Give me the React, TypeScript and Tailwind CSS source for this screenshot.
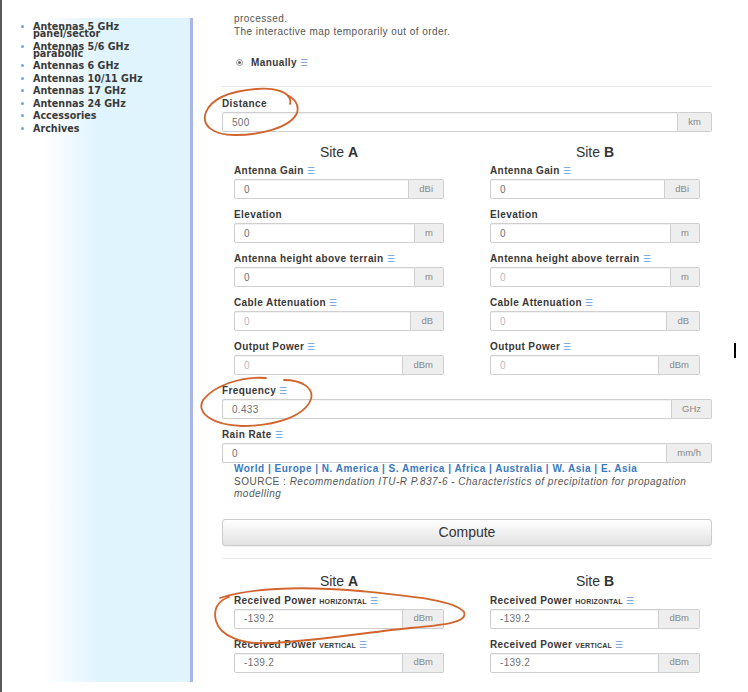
import React from 'react'

const SIDEBAR = [
  ['Antennas 5 GHz', 'panel/sector'],
  ['Antennas 5/6 GHz', 'parabolic'],
  ['Antennas 6 GHz'],
  ['Antennas 10/11 GHz'],
  ['Antennas 17 GHz'],
  ['Antennas 24 GHz'],
  ['Accessories'],
  ['Archives'],
]

const REGIONS = ['World', 'Europe', 'N. America', 'S. America', 'Africa', 'Australia', 'W. Asia', 'E. Asia']

function Info() {
  return <span className="ml-[3px] text-[8.5px] font-normal tracking-normal text-[#6b9ad6]">☰</span>
}

function InputGroup({ value, unit, faint }: { value: string; unit: string; faint?: boolean }) {
  return (
    <div className="flex h-[20px]">
      <div
        className={[
          'flex flex-1 items-center rounded-l-[2px] border border-[#cfcfcf] bg-white px-[9px] text-[10px] tracking-[0.3px] shadow-[inset_0_1px_1px_rgba(0,0,0,0.06)]',
          faint ? 'text-[#bbb]' : 'text-[#707070]',
        ].join(' ')}
      >
        {value}
      </div>
      <div className="flex items-center rounded-r-[2px] border border-l-0 border-[#cfcfcf] bg-[#eee] px-[10px] text-[9.5px] text-[#888]">
        {unit}
      </div>
    </div>
  )
}

function Label({ children }: { children: React.ReactNode }) {
  return <div className="mb-[3px] h-[11px] whitespace-nowrap text-[10px] font-bold leading-[11px] tracking-[0.4px] text-[#383838]">{children}</div>
}

type F = { label: string; info?: boolean; value: string; unit: string; faint?: boolean; sub?: string }

function Field({ label, info, value, unit, faint, sub }: F) {
  return (
    <div className="mb-[10px]">
      <Label>
        {label}
        {sub && <span className="ml-[3px] text-[7px] uppercase tracking-[0.2px]">{sub}</span>}
        {info && <Info />}
      </Label>
      <InputGroup value={value} unit={unit} faint={faint} />
    </div>
  )
}

function SiteTitle({ s }: { s: string }) {
  return (
    <div className="text-center text-[14px] leading-[15px] text-[#333]">
      Site <b>{s}</b>
    </div>
  )
}

const SITE_A: F[] = [
  { label: 'Antenna Gain', info: true, value: '0', unit: 'dBi' },
  { label: 'Elevation', value: '0', unit: 'm' },
  { label: 'Antenna height above terrain', info: true, value: '0', unit: 'm' },
  { label: 'Cable Attenuation', info: true, value: '0', unit: 'dB', faint: true },
  { label: 'Output Power', info: true, value: '0', unit: 'dBm', faint: true },
]

const SITE_B: F[] = [
  { label: 'Antenna Gain', info: true, value: '0', unit: 'dBi' },
  { label: 'Elevation', value: '0', unit: 'm' },
  { label: 'Antenna height above terrain', info: true, value: '0', unit: 'm', faint: true },
  { label: 'Cable Attenuation', info: true, value: '0', unit: 'dB', faint: true },
  { label: 'Output Power', info: true, value: '0', unit: 'dBm', faint: true },
]

const RESULT: F[] = [
  { label: 'Received Power', sub: 'horizontal', info: true, value: '-139.2', unit: 'dBm' },
  { label: 'Received Power', sub: 'vertical', info: true, value: '-139.2', unit: 'dBm' },
]

export default function App() {
  return (
    <div className="relative flex h-[692px] w-[748px] overflow-hidden bg-white font-['Liberation_Sans',Arial,sans-serif]">
      <div className="h-full w-[2px] shrink-0 bg-[#5a5a5a]" />

      {/* sidebar */}
      <div className="w-[191px] shrink-0 pt-[18px]">
        <div className="h-[664px] border-r-[3px] border-[#aab5ea] bg-gradient-to-r from-white from-[22%] to-[#e0f4fe] to-[52%] pt-[5px]">
          <ul className="flex flex-col gap-[5.5px] font-['DejaVu_Sans',Verdana,sans-serif] text-[9.6px] font-bold leading-[7px] text-[#3a3a3a]">
            {SIDEBAR.map((lines) => (
              <li key={lines[0]} className="flex">
                <span className="ml-[19px] mt-[2px] h-[3px] w-[3px] shrink-0 rounded-full bg-[#6aa8e0]" />
                <span className="ml-[9px]">
                  {lines.map((l) => (
                    <span key={l} className="block">
                      {l}
                    </span>
                  ))}
                </span>
              </li>
            ))}
          </ul>
        </div>
      </div>

      {/* main */}
      <div className="ml-[29px] w-[490px] shrink-0 pt-[12px]">
        <div className="pl-3 text-[10px] leading-[13px] tracking-[0.45px] text-[#555]">
          <div>processed.</div>
          <div>The interactive map temporarily out of order.</div>
        </div>

        <div className="mt-[18px] flex h-[12px] items-center pl-[14px]">
          <span className="flex h-[7px] w-[7px] items-center justify-center rounded-full border border-[#999]">
            <span className="h-[3px] w-[3px] rounded-full bg-[#666]" />
          </span>
          <span className="ml-[8px] text-[10px] font-bold tracking-[0.4px] text-[#383838]">
            Manually
            <Info />
          </span>
        </div>

        <div className="mt-[18px] h-px bg-[#e8e8e8]" />

        <div className="mt-[11px]">
          <Field label="Distance" value="500" unit="km" />
        </div>

        <div className="-mt-[10px] grid grid-cols-[210px_210px] gap-x-[46px] pl-3">
          {[
            ['A', SITE_A],
            ['B', SITE_B],
          ].map(([s, fields]) => (
            <div key={s as string}>
              <div className="mb-[5px] mt-[13px]">
                <SiteTitle s={s as string} />
              </div>
              {(fields as F[]).map((f) => (
                <Field key={f.label} {...f} />
              ))}
            </div>
          ))}
        </div>

        <Field label="Frequency" info value="0.433" unit="GHz" />
        <div>
          <Label>
            Rain Rate
            <Info />
          </Label>
          <InputGroup value="0" unit="mm/h" />
        </div>

        <div className="pl-3 pr-3 text-[10px] leading-[12.5px]">
          <div className="font-bold tracking-[0.5px] text-[#3a78c0]">
            {REGIONS.map((r, i) => (
              <span key={r}>
                {i > 0 && ' | '}
                {r}
              </span>
            ))}
          </div>
          <div className="tracking-[0.5px] text-[#555]">
            SOURCE : <i>Recommendation ITU-R P.837-6 - Characteristics of precipitation for propagation modelling</i>
          </div>
        </div>

        <button
          type="button"
          className="mt-[18px] flex h-[27px] w-full items-center justify-center rounded-[3px] border border-[#ccc] bg-gradient-to-b from-white to-[#e2e2e2] text-[14px] text-[#333] shadow-[0_1px_1px_rgba(0,0,0,0.06)]"
        >
          Compute
        </button>

        <div className="mt-[12px] h-px bg-[#ececec]" />

        <div className="grid grid-cols-[210px_210px] gap-x-[46px] pl-3">
          {['A', 'B'].map((s) => (
            <div key={s}>
              <div className="mb-[6px] mt-[15px]">
                <SiteTitle s={s} />
              </div>
              {RESULT.map((f) => (
                <Field key={f.sub} {...f} />
              ))}
            </div>
          ))}
        </div>
      </div>

      {/* hand-drawn marks over the screenshot */}
      <svg className="pointer-events-none absolute inset-0" width="748" height="692" viewBox="0 0 748 692" fill="none">
        <g stroke="#d2642e" strokeWidth="1.8" strokeLinecap="round" strokeLinejoin="round">
          <path d="M 290 104 C 293 93, 276 87, 256 89 C 232 91, 212 98, 206 112 C 201 125, 212 135, 235 135 C 260 135, 290 128, 297 113 C 299 106, 296 100, 289 96" />
          <path d="M 266 378 C 240 376, 214 386, 203 400 C 196 413, 212 425, 242 426 C 276 426, 305 416, 311 399 C 314 388, 302 380, 284 380" />
          <path d="M 220 598 C 252 588, 302 586, 360 591 C 410 596, 455 600, 464 612 C 468 622, 446 625, 410 628 C 370 632, 322 640, 272 643 C 242 645, 220 636, 216 621 C 213 609, 218 601, 229 597" />
        </g>
      </svg>
      <div className="absolute left-[734px] top-[343px] h-[15px] w-[2px] bg-black" />
    </div>
  )
}
